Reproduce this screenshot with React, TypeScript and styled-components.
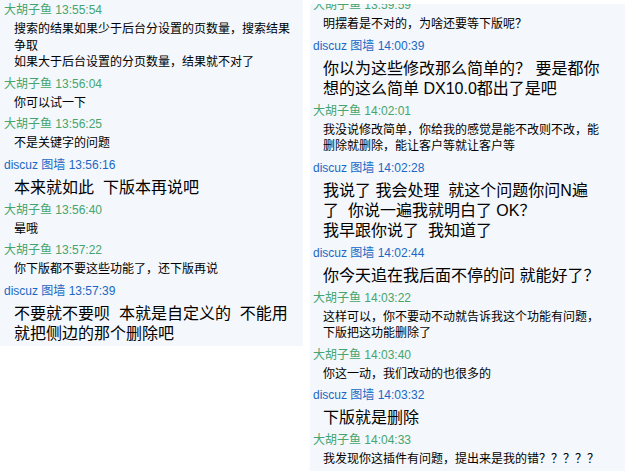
import React from 'react'
import styled, { createGlobalStyle } from 'styled-components'

type Who = 'fish' | 'discuz'

type Msg = {
  who: Who
  time: string
  big?: boolean
  lines: string[]
}

const GlobalStyle = createGlobalStyle`
  html, body {
    margin: 0;
    padding: 0;
    background: #ffffff;
  }
  body {
    font-family: "Liberation Sans", "Noto Sans CJK SC", sans-serif;
    color: #000;
  }
`

const Page = styled.div`
  display: flex;
  align-items: flex-start;
  gap: 7px;
  width: 625px;
  height: 476px;
  overflow: hidden;
`

const Panel = styled.div<{ $side: 'left' | 'right' }>`
  background: #f4f7fb;
  overflow: hidden;
  width: ${(p) => (p.$side === 'left' ? '299px' : 'auto')};
  flex: ${(p) => (p.$side === 'left' ? 'none' : '1')};
  padding-left: ${(p) => (p.$side === 'left' ? '4px' : '3px')};
  margin-top: ${(p) => (p.$side === 'left' ? '0' : '4px')};
`

const Log = styled.div<{ $shift: number }>`
  display: flex;
  flex-direction: column;
  margin-top: ${(p) => p.$shift}px;
`

const Entry = styled.div<{ $big?: boolean }>`
  padding-bottom: ${(p) => (p.$big ? '2px' : '3px')};
`

const Header = styled.div<{ $who: Who }>`
  font-size: 12px;
  line-height: 20px;
  white-space: pre;
  color: ${(p) => (p.$who === 'fish' ? '#45a56d' : '#1a68c4')};
`

const Body = styled.div<{ $big?: boolean }>`
  margin-left: 10px;
  font-size: ${(p) => (p.$big ? '16px' : '12px')};
  line-height: ${(p) => (p.$big ? '20px' : '16.5px')};
  padding-top: ${(p) => (p.$big ? '3px' : '1px')};
  white-space: pre;
`

const name = (who: Who) => (who === 'fish' ? '大胡子鱼' : 'discuz 图墙')

const left: Msg[] = [
  {
    who: 'fish',
    time: '13:55:54',
    lines: ['搜索的结果如果少于后台分设置的页数量，搜索结果', '争取', '如果大于后台设置的分页数量，结果就不对了'],
  },
  { who: 'fish', time: '13:56:04', lines: ['你可以试一下'] },
  { who: 'fish', time: '13:56:25', lines: ['不是关键字的问题'] },
  { who: 'discuz', time: '13:56:16', big: true, lines: ['本来就如此  下版本再说吧'] },
  { who: 'fish', time: '13:56:40', lines: ['晕哦'] },
  { who: 'fish', time: '13:57:22', lines: ['你下版都不要这些功能了，还下版再说'] },
  {
    who: 'discuz',
    time: '13:57:39',
    big: true,
    lines: ['不要就不要呗  本就是自定义的  不能用', '就把侧边的那个删除吧'],
  },
]

const right: Msg[] = [
  { who: 'fish', time: '13:59:59', lines: ['明摆着是不对的，为啥还要等下版呢？'] },
  {
    who: 'discuz',
    time: '14:00:39',
    big: true,
    lines: ['你以为这些修改那么简单的？ 要是都你', '想的这么简单 DX10.0都出了是吧'],
  },
  {
    who: 'fish',
    time: '14:02:01',
    lines: ['我没说修改简单，你给我的感觉是能不改则不改，能', '删除就删除，能让客户等就让客户等'],
  },
  {
    who: 'discuz',
    time: '14:02:28',
    big: true,
    lines: ['我说了 我会处理  就这个问题你问N遍', '了  你说一遍我就明白了 OK？', '我早跟你说了  我知道了'],
  },
  { who: 'discuz', time: '14:02:44', big: true, lines: ['你今天追在我后面不停的问 就能好了？'] },
  {
    who: 'fish',
    time: '14:03:22',
    lines: ['这样可以，你不要动不动就告诉我这个功能有问题，', '下版把这功能删除了'],
  },
  { who: 'fish', time: '14:03:40', lines: ['你这一动，我们改动的也很多的'] },
  { who: 'discuz', time: '14:03:32', big: true, lines: ['下版就是删除'] },
  { who: 'fish', time: '14:04:33', lines: ['我发现你这插件有问题，提出来是我的错？？？？？'] },
]

const Chat = ({ items }: { items: Msg[] }) => (
  <>
    {items.map((m, i) => (
      <Entry key={i} $big={m.big}>
        <Header $who={m.who}>{`${name(m.who)} ${m.time}`}</Header>
        <Body $big={m.big}>{m.lines.join('\n')}</Body>
      </Entry>
    ))}
  </>
)

export default function App() {
  return (
    <>
      <GlobalStyle />
      <Page>
        <Panel $side="left">
          <Log $shift={0}>
            <Chat items={left} />
          </Log>
        </Panel>
        <Panel $side="right">
          <Log $shift={-9}>
            <Chat items={right} />
          </Log>
        </Panel>
      </Page>
    </>
  )
}
